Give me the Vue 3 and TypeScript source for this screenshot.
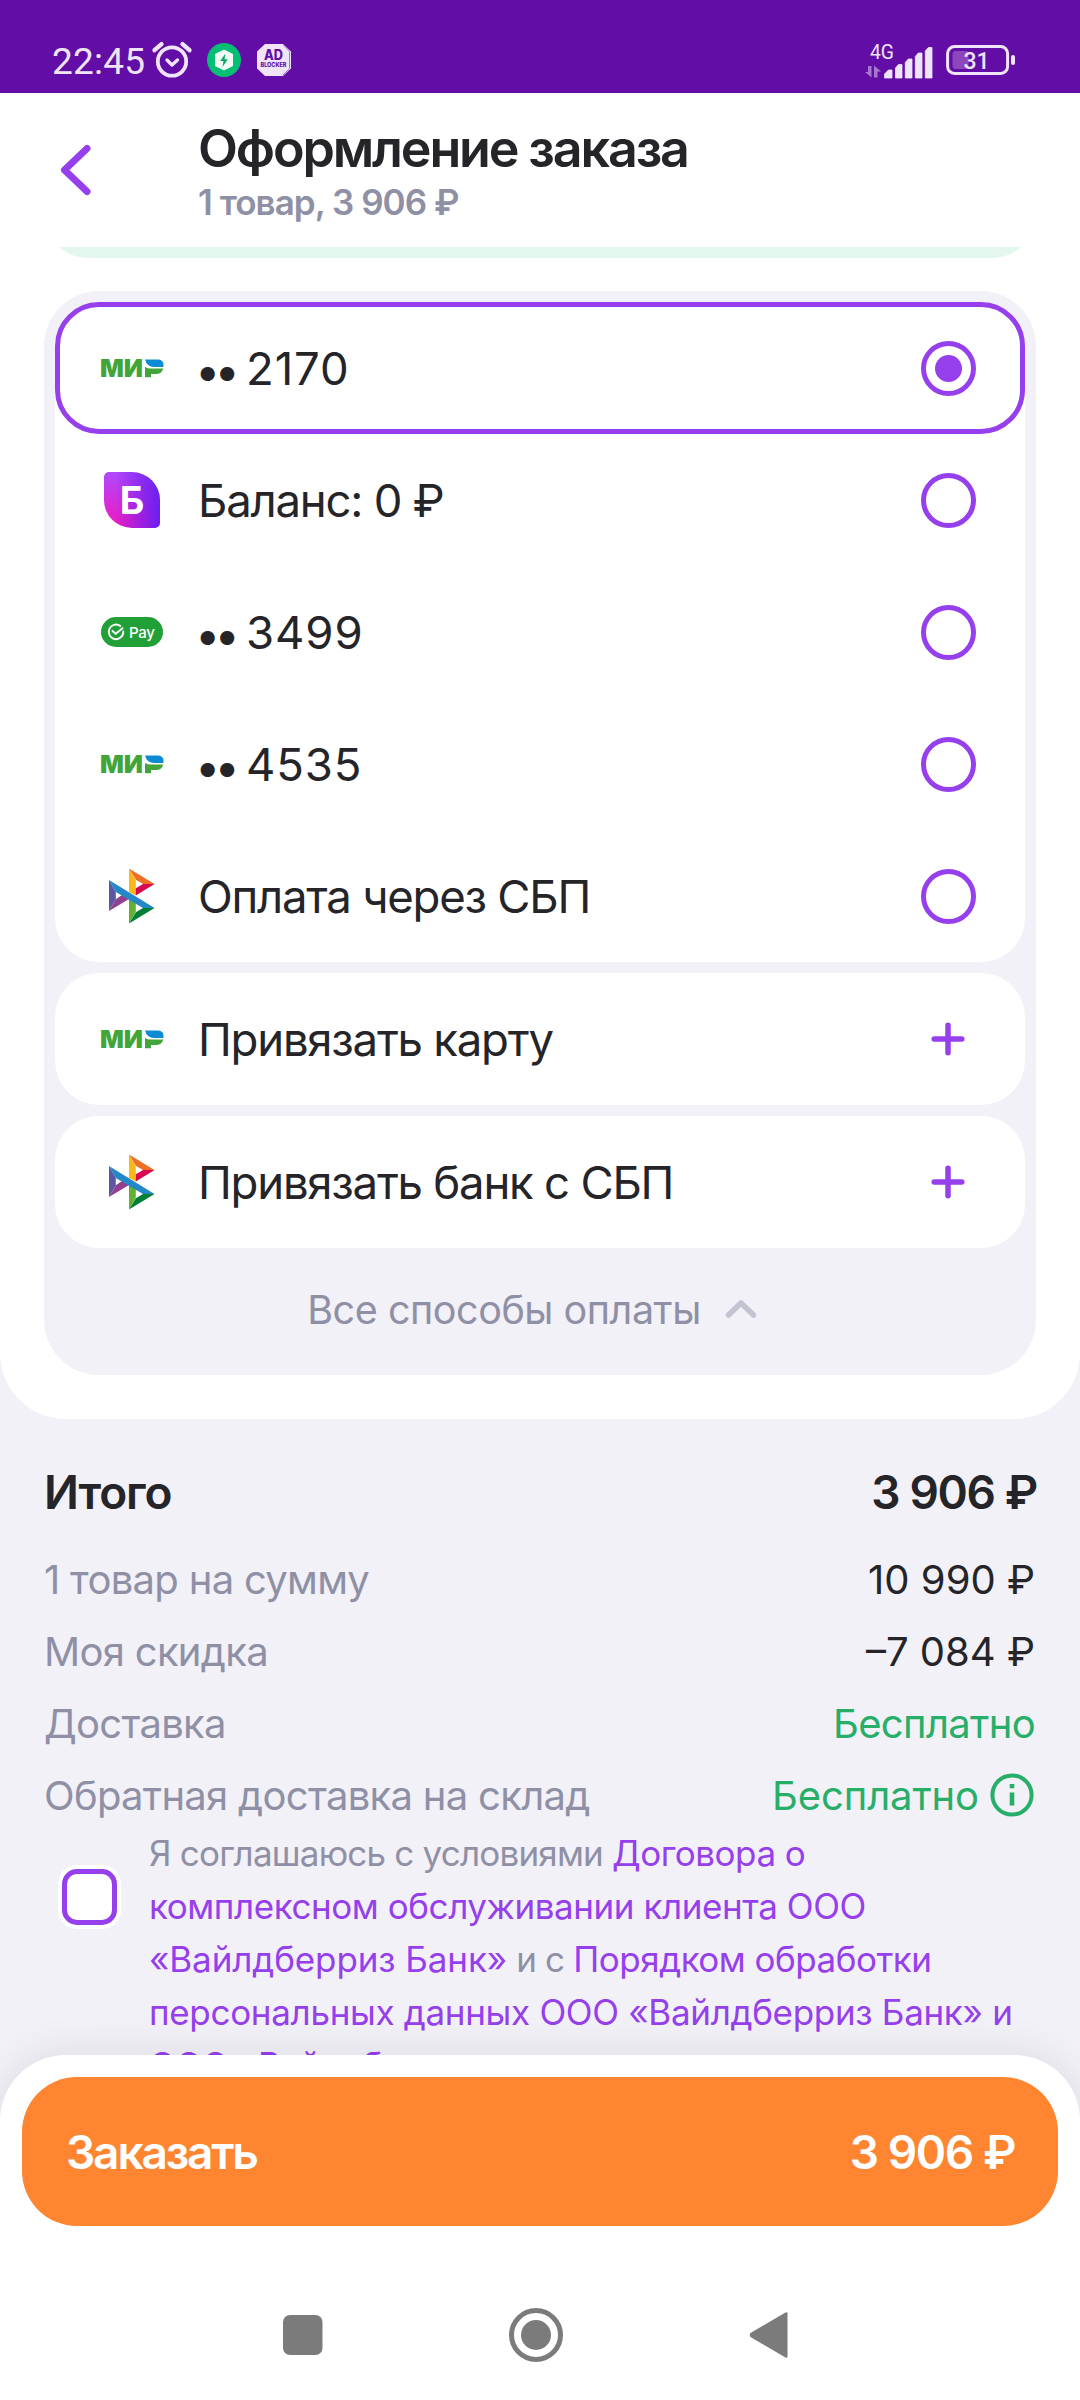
<script setup lang="ts">
import { ref } from 'vue'

type Icon = 'mir' | 'balance' | 'pay' | 'sbp'
interface Method { icon: Icon; label: string; masked?: boolean }
interface Segment { text: string; link?: boolean; spacing: number }

const methods: Method[] = [
  { icon: 'mir', label: '2170', masked: true },
  { icon: 'balance', label: 'Баланс: 0 ₽' },
  { icon: 'pay', label: '3499', masked: true },
  { icon: 'mir', label: '4535', masked: true },
  { icon: 'sbp', label: 'Оплата через СБП' },
]
const links: Method[] = [
  { icon: 'mir', label: 'Привязать карту' },
  { icon: 'sbp', label: 'Привязать банк с СБП' },
]
const groups = [methods, [links[0]], [links[1]]]
const selected = ref(0)

const totals = [
  { name: '1 товар на сумму', value: '10 990 ₽' },
  { name: 'Моя скидка', value: '–7 084 ₽' },
  { name: 'Доставка', value: 'Бесплатно', free: true },
  { name: 'Обратная доставка на склад', value: 'Бесплатно', free: true, info: true },
]

const terms: Segment[][] = [
  [
    { text: 'Я соглашаюсь с условиями ', spacing: -0.8 },
    { text: 'Договора о', link: true, spacing: -0.5 },
  ],
  [{ text: 'комплексном обслуживании клиента ООО', link: true, spacing: -0.43 }],
  [
    { text: '«Вайлдберриз Банк»', link: true, spacing: -0.1 },
    { text: ' и с ', spacing: -0.8 },
    { text: 'Порядком обработки', link: true, spacing: -0.5 },
  ],
  [{ text: 'персональных данных ООО «Вайлдберриз Банк» и', link: true, spacing: -0.31 }],
  [{ text: 'ООО «Вайлдберриз', link: true, spacing: -0.3 }],
]
</script>

<template>
  <div class="screen">
    <div class="status">
      <div class="status-left">
        <span class="time">22:45</span>
        <svg class="alarm" width="40" height="38" viewBox="0 0 40 38" fill="none" stroke="#f0e4fa" stroke-linecap="round">
          <circle cx="20" cy="20.5" r="14.2" stroke-width="3.8" />
          <path d="M15 19l5 5 5.500-5" stroke-width="3.400" stroke-linejoin="round" />
          <path d="M2.500 9.200l7-6M30.500 3.200l7 6" stroke-width="4.400" />
        </svg>
        <svg class="bolt" width="34" height="34" viewBox="0 0 34 34">
          <circle cx="17" cy="17" r="17" fill="#06be74" />
          <path d="M17 6.500l9 4.600v11.800l-9 4.600-9-4.600V11.100z" fill="#f0fbf6" />
          <path d="M18.500 10.500l-5.300 7.500h3.300l-1 6 5.300-7.700h-3.300z" fill="#06a866" />
        </svg>
        <svg class="adb" width="34" height="32" viewBox="0 0 34 32">
          <path d="M8 0h18l8 7.500v17L26 32H8l-8-7.500v-17z" fill="#f0e4fa" />
          <path d="M26.500 1l6 6.500v17L26 31" fill="none" stroke="#a678cf" stroke-width="1" />
          <text x="7" y="15.500" class="adb-a" textLength="19" lengthAdjust="spacingAndGlyphs">AD</text>
          <text x="3.500" y="23" class="adb-b" textLength="26" lengthAdjust="spacingAndGlyphs">BLOCKER</text>
        </svg>
      </div>
      <div class="status-right">
        <svg width="70" height="36" viewBox="0 0 70 36">
          <text x="5" y="16.500" class="net" textLength="24" lengthAdjust="spacingAndGlyphs">4G</text>
          <path d="M6.500 24v11.500L0 30h3V24zM9 35.500V23.500l7 6h-3.500v6z" fill="#a678cf" />
          <path
            d="M19.500 36v-4l4-4h3.500v8zM30.500 36V26l3-3.500H37V36zM40.300 36V20.500l3-3.500H47v19zM50.300 36V14.500l3-3.500H57v25zM60.300 36V9l3-3.500H67V36z"
            fill="#f0e4fa"
            stroke="#f0e4fa"
            stroke-width=".8"
            stroke-linejoin="round"
          />
        </svg>
        <svg class="batt" width="70" height="30" viewBox="0 0 70 30">
          <rect x="1.600" y="1.600" width="60" height="26.800" rx="7" fill="none" stroke="#f0e4fa" stroke-width="3" />
          <rect x="6.500" y="6" width="16" height="18" rx="3" fill="#8c47bd" />
          <rect x="65" y="10" width="4" height="10" rx="2" fill="#f0e4fa" />
          <text x="30.500" y="24" text-anchor="middle" class="pct">31</text>
        </svg>
      </div>
    </div>

    <div class="header">
      <svg class="back" width="32" height="52" viewBox="0 0 32 52" fill="none" stroke="#963fed" stroke-width="7" stroke-linecap="round" stroke-linejoin="round">
        <path d="M27 4.500L4.500 26 27 47.500" />
      </svg>
      <div class="titles">
        <div class="title">Оформление заказа</div>
        <div class="subtitle">1 товар, 3 906 ₽</div>
      </div>
    </div>

    <div class="content">
      <div class="sheet">
        <div class="peek"><div class="peek-card"></div></div>
        <div class="payment">
          <div v-for="(group, g) in groups" :key="g" class="group">
            <div v-for="(m, i) in group" :key="m.label" class="method" :class="{ active: g === 0 && selected === i }">
              <div class="icon">
                <svg v-if="m.icon === 'mir'" width="64" height="20" viewBox="0 -.6 64 20">
                  <text x="0" y="18.600" class="mir" textLength="43" lengthAdjust="spacingAndGlyphs">МИ</text>
                  <path d="M45 8.500q2.500 1.500 6 1.500h12.300q-1.600 5.500-7.300 5.500H51v3.100h-6z" fill="#42a539" />
                  <path d="M45 1h12.500q6 0 6 5.500 0 1.300-.2 2H54q-7 0-9-7.500z" fill="#0a8bd3" />
                </svg>
                <div v-else-if="m.icon === 'balance'" class="balance">Б</div>
                <div v-else-if="m.icon === 'pay'" class="pay">
                  <svg width="18" height="18" viewBox="0 0 18 18" fill="none" stroke="#fff" stroke-width="1.900" stroke-linecap="round">
                    <path d="M13.200 2.900A7.300 7.300 0 1 0 16.300 8.500" />
                    <path d="M5.500 8l3.200 2.800 6.800-5.600" />
                  </svg>
                  <span>Pay</span>
                </div>
                <svg v-else width="46" height="56" viewBox="0 0 46 56">
                  <path d="M0 12l6.800 12v7.300L0 43z" fill="#5b57a2" />
                  <path d="M6.800 31.300L0 43l20-12-7-4z" fill="#90408f" />
                  <path d="M20 .5l6.800 12v15L20 24z" fill="#fab718" />
                  <path d="M20 .5l25.500 15.500H34l-7.200-4.300z" fill="#ed6f26" />
                  <path d="M45.500 16L26.800 27.500v-7.300L34 16z" fill="#d90751" />
                  <path d="M20 55.500l6.800-12V35L20 31z" fill="#63b22f" />
                  <path d="M20 55.500L45.500 40H34l-7.200 4.300z" fill="#017f36" />
                  <path d="M0 12l45.500 28H34L6.800 24z" fill="#2387c8" />
                </svg>
              </div>
              <div class="label" :class="{ masked: m.masked }">
                <span v-if="m.masked" class="dots">••</span>
                <span>{{ m.label }}</span>
              </div>
              <div v-if="g === 0" class="radio"><i v-if="selected === i"></i></div>
              <svg v-else class="plus" width="34" height="34" viewBox="0 0 34 34" stroke="#963fed" stroke-width="5.500" stroke-linecap="round">
                <path d="M17 3.200v27.600M3.200 17h27.600" />
              </svg>
            </div>
          </div>
          <div class="all">
            <span>Все способы оплаты</span>
            <svg width="32" height="20" viewBox="0 0 32 20" fill="none" stroke="#c3c3d1" stroke-width="5.500" stroke-linecap="round" stroke-linejoin="round">
              <path d="M3.500 15L16 3l12.500 12" />
            </svg>
          </div>
        </div>
      </div>

      <div class="sum">
        <span class="sum-name">Итого</span>
        <span class="sum-value">3 906 ₽</span>
      </div>
      <div class="rows">
        <div v-for="row in totals" :key="row.name" class="row">
          <span class="name">{{ row.name }}</span>
          <span class="value" :class="{ free: row.free, info: row.info }">
            <span>{{ row.value }}</span>
            <svg v-if="row.info" width="44" height="44" viewBox="0 0 44 44" fill="none" stroke="#27ae68">
              <circle cx="22" cy="22" r="19.600" stroke-width="4" />
              <path d="M22 19.500v13M22 11v4.200" stroke-width="4.600" />
            </svg>
          </span>
        </div>
      </div>

      <div class="agree">
        <div class="check"></div>
        <div class="terms">
          <div v-for="(line, l) in terms" :key="l" class="line">
            <span v-for="(s, k) in line" :key="k" :class="{ link: s.link }" :style="{ letterSpacing: s.spacing + 'px' }">{{ s.text }}</span>
          </div>
        </div>
      </div>
    </div>

    <div class="bottom">
      <div class="order">
        <span class="order-name">Заказать</span>
        <span class="order-value">3 906 ₽</span>
      </div>
      <svg class="nav" width="506" height="56" viewBox="0 0 506 56" fill="#7b7b7b">
        <rect x="0" y="8" width="39.500" height="40" rx="7" />
        <circle cx="253" cy="28" r="24.500" fill="none" stroke="#7b7b7b" stroke-width="5" />
        <circle cx="253" cy="28" r="15" />
        <path d="M467.500 26q-1.500 2 0 4l35 20.500q2 1 2-1V6.500q0-2-2-1z" />
      </svg>
    </div>
  </div>
</template>

<style>
body { margin: 0; background: #fff; }
</style>

<style scoped>
.screen {
  width: 1080px;
  height: 2400px;
  display: flex;
  flex-direction: column;
  overflow: hidden;
  background: #fff;
  color: #242429;
  font-family: Inter, "Liberation Sans", sans-serif;
  white-space: nowrap;
}
.screen svg { display: block; flex: none; overflow: visible; }

.status {
  height: 93px;
  flex: none;
  box-sizing: border-box;
  padding: 41px 64px 0 52px;
  display: flex;
  justify-content: space-between;
  align-items: flex-start;
  background: #620da5;
  color: #f0e4fa;
  font-family: Roboto, sans-serif;
}
.status-left, .status-right { display: flex; align-items: center; height: 38px; }
.time { font-size: 37px; font-weight: 450; line-height: 38px; width: 100px; padding-top: 3px; letter-spacing: 0.200px; }
.bolt { margin-left: 15px; }
.adb { margin-left: 16px; }
.adb-a { font: 800 14px Inter, sans-serif; fill: #620da5; }
.adb-b { font: 800 6px Inter, sans-serif; fill: #620da5; }
.net { font: 20px Roboto, sans-serif; fill: #f0e4fa; }
.batt { margin-left: 11px; }
.pct { font: 500 23px Roboto, sans-serif; fill: #f0e4fa; }

.header { height: 154px; flex: none; display: flex; }
.back { margin: 51px 0 0 60px; }
.titles { margin-left: 106px; padding-top: 22px; }
.title { font-size: 52px; line-height: 68px; font-weight: 600; letter-spacing: -2.150px; }
.subtitle { font-size: 35px; line-height: 38px; font-weight: 600; letter-spacing: -0.970px; color: #8f90a5; }

.content { height: 1878px; flex: none; overflow: hidden; background: #f2f1f7; }
.sheet { height: 1172px; background: #fff; border-radius: 0 0 66px 66px; }
.peek { margin: 0 44px; height: 11px; overflow: hidden; display: flex; align-items: flex-end; }
.peek-card { flex: 1 0 auto; height: 120px; border-radius: 44px; background: #e4f7ec; }
.payment {
  margin: 33px 44px 0;
  box-sizing: border-box;
  height: 1084px;
  padding: 11px;
  display: flex;
  flex-direction: column;
  gap: 11px;
  border-radius: 55px;
  background: #f2f1f7;
}
.group { border-radius: 44px; background: #fff; }
.method {
  height: 132px;
  box-sizing: border-box;
  display: flex;
  align-items: center;
  padding: 0 49px 0 39px;
  border-radius: 44px;
}
.method.active { border: 5px solid #963fed; padding: 0 44px 0 34px; }
.icon { width: 76px; display: flex; justify-content: center; margin-right: 28px; }
.mir { font: 900 24px Inter, sans-serif; fill: #42a539; }
.balance {
  width: 56px;
  height: 56px;
  border-radius: 5px 28px 5px 28px;
  background: linear-gradient(90deg, transparent 20%, #6a1ff0 100%), linear-gradient(180deg, #b347fa 5%, #e81fc6 85%);
  color: #fff;
  font-size: 38px;
  font-weight: 700;
  line-height: 57px;
  text-align: center;
}
.pay {
  width: 62px;
  height: 30px;
  border-radius: 15px;
  background: #21a038;
  color: #fff;
  display: flex;
  align-items: center;
  box-sizing: border-box;
  padding-left: 6px;
  font-size: 15px;
  font-weight: 500;
  letter-spacing: -0.300px;
  gap: 4px;
}
.label { flex: 1; display: flex; align-items: center; font-size: 45.500px; letter-spacing: -1.230px; }
.masked { letter-spacing: 0.900px; }
.dots { width: 51px; margin-left: -3px; font-size: 45px; line-height: 45px; letter-spacing: -5.900px; position: relative; top: 2px; }
.radio {
  width: 55px;
  height: 55px;
  box-sizing: border-box;
  border: 5.500px solid #963fed;
  border-radius: 50%;
  display: flex;
  align-items: center;
  justify-content: center;
}
.radio i { width: 27px; height: 27px; border-radius: 50%; background: #963fed; }
.plus { margin-right: 11px; }
.all {
  flex: 1;
  display: flex;
  justify-content: center;
  align-items: center;
  gap: 24px;
  padding: 0 16px 4px 0;
  font-size: 39.500px;
  letter-spacing: -0.450px;
  color: #8f90a5;
}

.sum {
  height: 72px;
  margin: 37px 43px 0 44px;
  display: flex;
  justify-content: space-between;
  align-items: center;
  font-size: 46px;
  font-weight: 600;
}
.sum-name { letter-spacing: -1.100px; }
.sum-value { letter-spacing: -1.350px; }
.rows { margin: 29px 45px 0 44px; display: flex; flex-direction: column; gap: 28px; font-size: 40px; }
.row { height: 44px; display: flex; justify-content: space-between; align-items: center; }
.name { color: #8f90a5; letter-spacing: -0.700px; }
.value { display: flex; align-items: center; gap: 11px; letter-spacing: 0; }
.free { color: #27ae68; letter-spacing: -0.650px; }
.info { letter-spacing: -0.100px; margin-right: 1px; }

.agree { margin-top: 10px; display: flex; }
.check {
  flex: none;
  width: 55px;
  height: 56px;
  box-sizing: border-box;
  margin: 42px 0 0 62px;
  border: 5.500px solid #963fed;
  border-radius: 15px;
  background: #fff;
  box-shadow: 0 0 0 4px #fff;
}
.terms { margin-left: 32px; font-size: 35px; line-height: 53px; color: #8f90a5; }
.line { white-space: pre; }
.link { color: #963fed; }

.bottom {
  position: relative;
  height: 345px;
  flex: none;
  box-sizing: border-box;
  margin-top: -70px;
  padding-top: 22px;
  background: #fff;
  border-radius: 66px 66px 0 0;
  box-shadow: 0 0 44px rgba(30, 20, 50, 0.1);
}
.order {
  height: 149px;
  box-sizing: border-box;
  margin: 0 22px;
  padding: 0 43px 0 44px;
  display: flex;
  justify-content: space-between;
  align-items: center;
  border-radius: 55px;
  background: #ff8531;
  color: #fff;
  font-size: 46px;
  font-weight: 600;
}
.order-name { letter-spacing: -2.150px; }
.order-value { letter-spacing: -1.400px; }
.nav { margin: 81px 0 0 283px; }
</style>
